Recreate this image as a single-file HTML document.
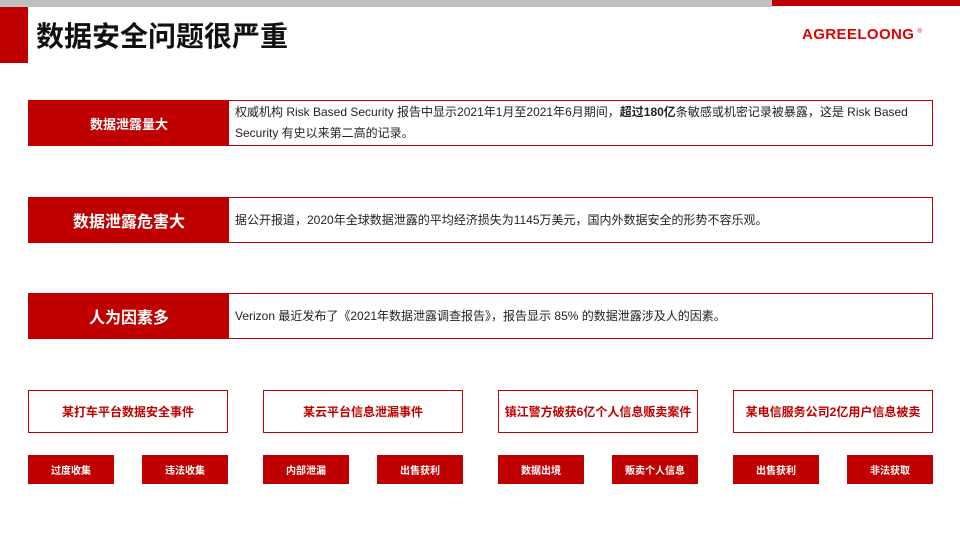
<!DOCTYPE html>
<html><head><meta charset="utf-8"><style>
*{margin:0;padding:0;box-sizing:border-box}
body{width:960px;height:540px;background:#fff;position:relative;overflow:hidden;font-family:"Liberation Sans","Noto Sans CJK SC",sans-serif}
.a{position:absolute}
.row{position:absolute;left:28px;width:905px;border:1px solid #c00000;display:flex}
.row .l{width:200px;background:#c00000;color:#fff;font-weight:bold;display:flex;align-items:center;justify-content:center;flex:none}
.row .r{padding:0 6px;font-size:12px;color:#222;display:flex;align-items:center;line-height:22px}
.ev{position:absolute;top:390px;width:200px;height:43px;border:1px solid #c00000;color:#c00000;font-weight:bold;font-size:12px;display:flex;align-items:center;justify-content:center}
.bt{position:absolute;top:455px;width:86px;height:29px;background:#c00000;color:#fff;font-weight:bold;font-size:10px;display:flex;align-items:center;justify-content:center}
</style></head><body>
<div class="a" style="left:0;top:0;width:772px;height:7px;background:#bfbfbf"></div>
<div class="a" style="left:772px;top:0;width:188px;height:6px;background:#c00000"></div>
<div class="a" style="left:0;top:7px;width:28px;height:56px;background:#c00000"></div>
<div class="a" style="left:36px;top:15px;font-size:28px;font-weight:bold;color:#111">数据安全问题很严重</div>
<div class="a" style="left:802px;top:26px;font-size:15px;font-weight:bold;color:#e00000;letter-spacing:0.4px">AGREELOONG<sup style="font-size:6px;font-weight:normal;margin-left:3px">®</sup></div>

<div class="row" style="top:100px;height:46px"><div class="l" style="font-size:13px">数据泄露量大</div><div class="r"><div style="font-size:12px;line-height:21px">权威机构 Risk Based Security 报告中显示2021年1月至2021年6月期间，<b>超过180亿</b>条敏感或机密记录被暴露，这是 Risk Based<br>Security 有史以来第二高的记录。</div></div></div>
<div class="row" style="top:197px;height:46px"><div class="l" style="font-size:16px">数据泄露危害大</div><div class="r"><div>据公开报道，2020年全球数据泄露的平均经济损失为1145万美元，国内外数据安全的形势不容乐观。</div></div></div>
<div class="row" style="top:293px;height:46px"><div class="l" style="font-size:16px">人为因素多</div><div class="r"><div>Verizon 最近发布了《2021年数据泄露调查报告》，报告显示 85% 的数据泄露涉及人的因素。</div></div></div>

<div class="ev" style="left:28px">某打车平台数据安全事件</div>
<div class="ev" style="left:263px">某云平台信息泄漏事件</div>
<div class="ev" style="left:498px">镇江警方破获6亿个人信息贩卖案件</div>
<div class="ev" style="left:733px">某电信服务公司2亿用户信息被卖</div>

<div class="bt" style="left:28px">过度收集</div>
<div class="bt" style="left:142px">违法收集</div>
<div class="bt" style="left:263px">内部泄漏</div>
<div class="bt" style="left:377px">出售获利</div>
<div class="bt" style="left:498px">数据出境</div>
<div class="bt" style="left:612px">贩卖个人信息</div>
<div class="bt" style="left:733px">出售获利</div>
<div class="bt" style="left:847px">非法获取</div>
</body></html>
